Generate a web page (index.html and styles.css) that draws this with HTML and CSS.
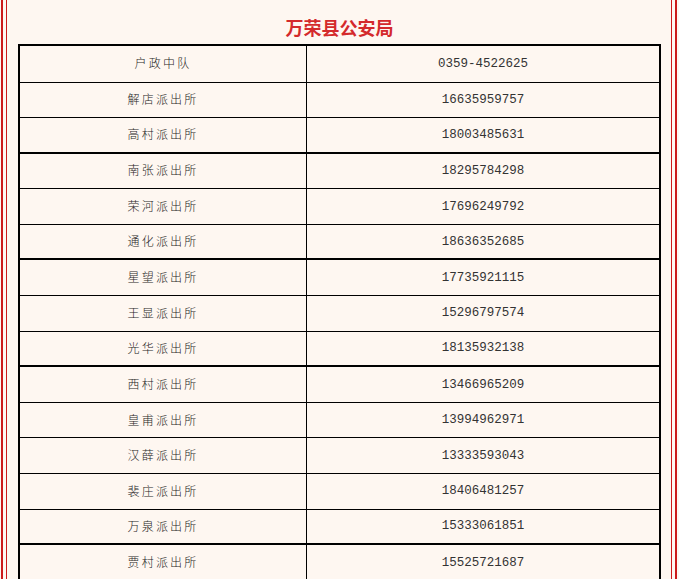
FILE: index.html
```html
<!DOCTYPE html>
<html lang="zh-CN">
<head>
<meta charset="utf-8">
<title>万荣县公安局</title>
<link rel="stylesheet" href="styles.css">
</head>
<body>
<div class="frame-outer">
  <div class="frame-inner">
    <h1 class="title">万荣县公安局</h1>
    <table class="contacts">
      <tbody>
        <tr><td class="name">户政中队</td><td class="phone">0359-4522625</td></tr>
        <tr><td class="name">解店派出所</td><td class="phone">16635959757</td></tr>
        <tr class="thick"><td class="name">高村派出所</td><td class="phone">18003485631</td></tr>
        <tr><td class="name">南张派出所</td><td class="phone">18295784298</td></tr>
        <tr><td class="name">荣河派出所</td><td class="phone">17696249792</td></tr>
        <tr class="thick"><td class="name">通化派出所</td><td class="phone">18636352685</td></tr>
        <tr><td class="name">星望派出所</td><td class="phone">17735921115</td></tr>
        <tr><td class="name">王显派出所</td><td class="phone">15296797574</td></tr>
        <tr class="thick"><td class="name">光华派出所</td><td class="phone">18135932138</td></tr>
        <tr><td class="name">西村派出所</td><td class="phone">13466965209</td></tr>
        <tr><td class="name">皇甫派出所</td><td class="phone">13994962971</td></tr>
        <tr><td class="name">汉薛派出所</td><td class="phone">13333593043</td></tr>
        <tr><td class="name">裴庄派出所</td><td class="phone">18406481257</td></tr>
        <tr class="thick"><td class="name">万泉派出所</td><td class="phone">15333061851</td></tr>
        <tr><td class="name">贾村派出所</td><td class="phone">15525721687</td></tr>
      </tbody>
    </table>
  </div>
</div>
</body>
</html>
```

FILE: styles.css
```css
html, body {
  margin: 0;
  padding: 0;
  background: #fef7f1;
}

body {
  font-family: "Noto Sans CJK SC", "Noto Sans", sans-serif;
  overflow: hidden;
  height: 579px;
}

.frame-outer {
  margin: 0 2px 0 1px;
  padding: 0 3px;
  border-left: 2px solid #cc1a1a;
  border-right: 2px solid #cc1a1a;
  min-height: 700px;
}

.frame-inner {
  border-left: 1px solid #cc1a1a;
  border-right: 1px solid #cc1a1a;
  padding: 0 10px 0 11px;
  min-height: 700px;
}

.title {
  margin: 0 0 7px;
  padding-top: 17px;
  font-size: 18px;
  line-height: 20px;
  font-weight: 700;
  text-align: center;
  color: #d42a2c;
  letter-spacing: 0;
}

.contacts {
  width: 643px;
  border-collapse: separate;
  border-spacing: 0;
  border-top: 2px solid #000;
  border-left: 2px solid #000;
  border-right: 2px solid #000;
  table-layout: fixed;
}

.contacts tr {
  height: 35.6px;
}

.contacts tr:first-child {
  height: 36.5px;
}

.contacts td {
  padding: 0;
  border-bottom: 1px solid #000;
  text-align: center;
  vertical-align: middle;
  color: #333;
}

.contacts tr.thick td {
  border-bottom-width: 2px;
}

.contacts td.name {
  width: 286px;
  border-right: 1px solid #000;
  font-size: 12px;
  letter-spacing: 2.2px;
  font-weight: 300;
  color: #1e1e1e;
  padding-top: 0;
  padding-bottom: 2px;
}

.contacts td.phone {
  font-family: "Liberation Mono", "DejaVu Sans Mono", monospace;
  font-size: 12.5px;
  letter-spacing: 0;
}
```
